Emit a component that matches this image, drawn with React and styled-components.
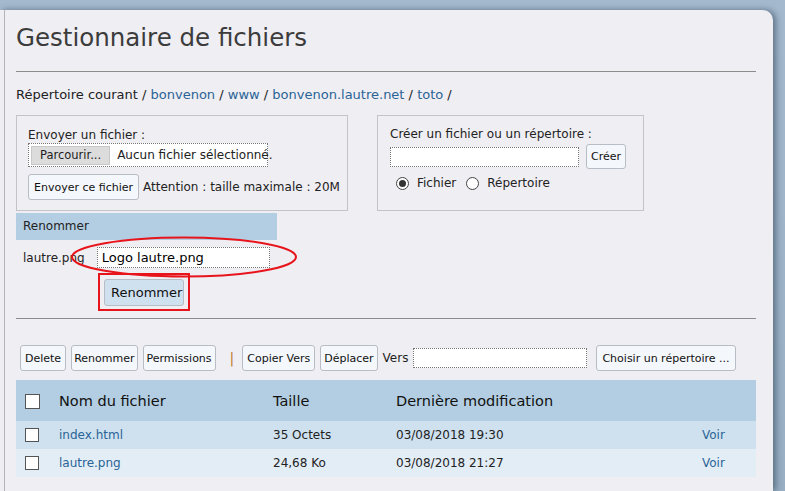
import React from "react";
import styled, { createGlobalStyle } from "styled-components";

const Global = createGlobalStyle`
  html, body {
    margin: 0;
    padding: 0;
    height: 100%;
    overflow: hidden;
  }
  body {
    background: linear-gradient(180deg, #a4b9cd 0%, #98afc4 100%);
    font-family: "DejaVu Sans", Verdana, sans-serif;
    font-size: 12px;
    color: #222;
  }
`;

const Page = styled.div`
  margin-top: 10px;
  width: 773px;
  height: 481px;
  background: #efeef3;
  border-top-right-radius: 10px;
  box-shadow: 3px 0 6px rgba(40, 60, 80, 0.55);
  overflow: hidden;
`;

const Content = styled.div`
  margin-left: 4px;
  border-left: 1px solid #b4b4b8;
  height: 100%;
  padding: 0 17px 0 11px;
`;

const Title = styled.h1`
  margin: 0;
  padding-top: 12px;
  font-size: 24.5px;
  font-weight: normal;
  color: #3c3c3c;
  line-height: 32px;
`;

const Rule = styled.hr`
  margin: ${(p) => p.$m || "0"};
  border: 0;
  border-top: 1px solid #8c8c8c;
  height: 0;
`;

const Crumbs = styled.div`
  margin-top: 14px;
  font-size: 13px;
  line-height: 18px;
`;

const Link = styled.a`
  color: #2a6496;
  text-decoration: none;
`;

const Boxes = styled.div`
  display: flex;
  gap: 29px;
  margin-top: 11px;
`;

const Fieldset = styled.div`
  width: ${(p) => p.$w}px;
  height: 96px;
  box-sizing: border-box;
  border: 1px solid #c4c4c8;
  padding: ${(p) => p.$pad};
`;

const Label = styled.div`
  font-size: 12px;
  line-height: 16px;
`;

const Row = styled.div`
  display: flex;
  align-items: center;
  gap: ${(p) => p.$gap || 4}px;
  margin-top: ${(p) => p.$mt || 0}px;
`;

const FileInput = styled.div`
  display: flex;
  align-items: center;
  border: 1px dotted #777;
  background: #fff;
  width: 240px;
  height: 24px;
  box-sizing: border-box;
  padding: 2px;
  gap: 7px;
  white-space: nowrap;
  font-size: 12px;
`;

const Browse = styled.span`
  background: #dcdcdc;
  border: 1px solid #c8c8c8;
  padding: 1px 8px;
  line-height: 15px;
  font-size: 11.5px;
`;

const Button = styled.button`
  font-family: "DejaVu Sans", Verdana, sans-serif;
  font-size: 11px;
  color: #111;
  height: ${(p) => p.$h || 26}px;
  padding: 0 ${(p) => p.$px ?? 4}px;
  background: ${(p) => p.$bg || "#f4f7fb"};
  border: 1px solid #b8bcc4;
  border-radius: 3px;
  white-space: nowrap;
  cursor: pointer;
`;

const TextInput = styled.input`
  width: ${(p) => p.$w}px;
  height: ${(p) => p.$h || 21}px;
  box-sizing: border-box;
  border: 1px dotted #777;
  background: #fff;
  font-family: "DejaVu Sans", Verdana, sans-serif;
  font-size: 13px;
  padding: 0 4px;
  outline: none;
`;

const Radio = styled.span`
  display: inline-block;
  width: 11px;
  height: 11px;
  border: 1px solid #444;
  border-radius: 50%;
  background: #fff;
  position: relative;
  &::after {
    content: "";
    display: ${(p) => (p.$on ? "block" : "none")};
    position: absolute;
    left: 2px;
    top: 2px;
    width: 7px;
    height: 7px;
    border-radius: 50%;
    background: #333;
  }
`;

const RenameBar = styled.div`
  width: 261px;
  height: 27px;
  margin-top: 2px;
  background: #b3cee2;
  line-height: 27px;
  padding-left: 7px;
  box-sizing: border-box;
  font-size: 12px;
`;

const RenameRow = styled.div`
  position: relative;
  display: flex;
  align-items: center;
  margin-top: 7px;
  padding-left: 7px;
  font-size: 12px;
  gap: 12px;
`;

const Ellipse = styled.svg`
  position: absolute;
  left: 54px;
  top: -11px;
  pointer-events: none;
`;

const RenameAction = styled.div`
  margin: 5px 0 0 82px;
  width: 92px;
  height: 38px;
  box-sizing: border-box;
  border: 2px solid #e8141b;
  display: flex;
  align-items: center;
  justify-content: center;
`;

const Toolbar = styled.div`
  display: flex;
  align-items: center;
  gap: 5px;
  margin: 26px 0 0 4px;
`;

const Sep = styled.span`
  color: #c07a2a;
  font-size: 14px;
  margin: 0 3px 0 9px;
`;

const Table = styled.table`
  width: 100%;
  margin-top: 9px;
  border-collapse: collapse;
  table-layout: fixed;
  font-size: 12px;
`;

const Head = styled.tr`
  background: #b3cee2;
  height: 41px;
  th {
    font-weight: normal;
    font-size: 14.5px;
    text-align: left;
    color: #111;
    padding: 0;
  }
`;

const BodyRow = styled.tr`
  background: ${(p) => p.$bg};
  height: 28px;
`;

const Cell = styled.td`
  padding: 0;
`;

const Check = styled.span`
  display: inline-block;
  width: ${(p) => p.$s}px;
  height: ${(p) => p.$s}px;
  border: 1px solid #555;
  background: #fff;
  vertical-align: middle;
  margin-left: 9px;
`;

const files = [
  { name: "index.html", size: "35 Octets", date: "03/08/2018 19:30", bg: "#cfe1ef" },
  { name: "lautre.png", size: "24,68 Ko", date: "03/08/2018 21:27", bg: "#e3edf6" },
];

export default function App() {
  return (
    <>
      <Global />
      <Page>
        <Content>
          <Title>Gestionnaire de fichiers</Title>
          <Rule $m="17px 0 0 0" />
          <Crumbs>
            Répertoire courant / <Link>bonvenon</Link> / <Link>www</Link> /{" "}
            <Link>bonvenon.lautre.net</Link> / <Link>toto</Link> /
          </Crumbs>

          <Boxes>
            <Fieldset $w={332} $pad="11px 0 0 11px">
              <Label>Envoyer un fichier :</Label>
              <FileInput>
                <Browse>Parcourir...</Browse>
                <span>Aucun fichier sélectionné.</span>
              </FileInput>
              <Row $mt={7}>
                <Button $px={5}>Envoyer ce fichier</Button>
                <span>Attention : taille maximale : 20M</span>
              </Row>
            </Fieldset>
            <Fieldset $w={267} $pad="10px 0 0 12px">
              <Label>Créer un fichier ou un répertoire :</Label>
              <Row $gap={7} $mt={2}>
                <TextInput $w={189} $h={20} />
                <Button $h={25}>Créer</Button>
              </Row>
              <Row $gap={8} $mt={7} style={{ paddingLeft: 6 }}>
                <Radio $on />
                <span>Fichier</span>
                <Radio style={{ marginLeft: 2 }} />
                <span>Répertoire</span>
              </Row>
            </Fieldset>
          </Boxes>

          <RenameBar>Renommer</RenameBar>
          <RenameRow>
            <span>lautre.png</span>
            <TextInput $w={173} defaultValue="Logo lautre.png" />
            <Ellipse width="228" height="42" viewBox="0 0 228 42">
              <ellipse cx="114" cy="21" rx="112" ry="19.5" fill="none" stroke="#e8141b" strokeWidth="2" />
            </Ellipse>
          </RenameRow>
          <RenameAction>
            <Button $bg="#cfe0ee" $h={27} $px={6} style={{ fontSize: 13, width: 80 }}>
              Renommer
            </Button>
          </RenameAction>
          <Rule $m="7px 0 0 0" />

          <Toolbar>
            <Button $px={4}>Delete</Button>
            <Button $px={2}>Renommer</Button>
            <Button $px={3}>Permissions</Button>
            <Sep>|</Sep>
            <Button $px={4}>Copier Vers</Button>
            <Button $px={3}>Déplacer</Button>
            <span style={{ fontSize: 12 }}>Vers</span>
            <TextInput $w={174} $h={20} />
            <Button $px={5} style={{ marginLeft: 4 }}>
              Choisir un répertoire ...
            </Button>
          </Toolbar>

          <Table>
            <colgroup>
              <col style={{ width: 43 }} />
              <col style={{ width: 214 }} />
              <col style={{ width: 123 }} />
              <col />
              <col style={{ width: 54 }} />
            </colgroup>
            <thead>
              <Head>
                <th>
                  <Check $s={13} />
                </th>
                <th>Nom du fichier</th>
                <th>Taille</th>
                <th>Dernière modification</th>
                <th></th>
              </Head>
            </thead>
            <tbody>
              {files.map((f) => (
                <BodyRow key={f.name} $bg={f.bg}>
                  <Cell>
                    <Check $s={12} />
                  </Cell>
                  <Cell>
                    <Link>{f.name}</Link>
                  </Cell>
                  <Cell>{f.size}</Cell>
                  <Cell>{f.date}</Cell>
                  <Cell>
                    <Link>Voir</Link>
                  </Cell>
                </BodyRow>
              ))}
            </tbody>
          </Table>
        </Content>
      </Page>
    </>
  );
}
